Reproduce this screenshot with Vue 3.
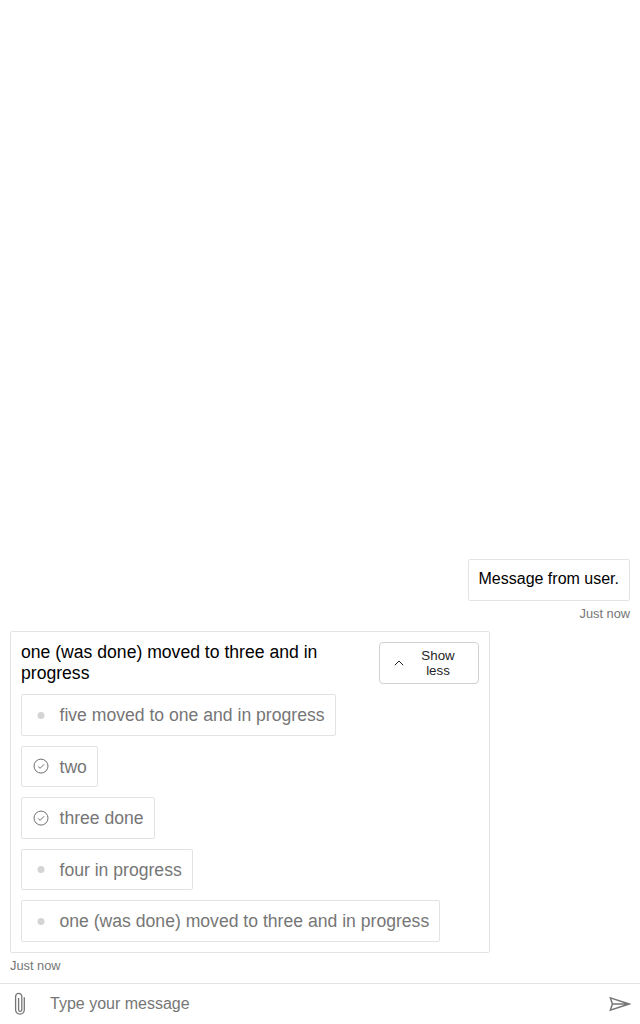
<script setup>
const steps = [
  { text: 'five moved to one and in progress', done: false },
  { text: 'two', done: true },
  { text: 'three done', done: true },
  { text: 'four in progress', done: false },
  { text: 'one (was done) moved to three and in progress', done: false },
]
</script>

<template>
  <main class="chat">
    <section class="transcript">
      <article class="from-user">
        <div class="bubble">Message from user.</div>
        <div class="time">Just now</div>
      </article>
      <article class="from-bot">
        <div class="activity">
          <header class="heading">
            <div class="title">one (was done) moved to three and in progress</div>
            <button class="toggle" type="button">
              <svg class="chevron" width="10" height="6" viewBox="0 0 10 6"><path d="M.8 5.2 5 1l4.2 4.2" /></svg>
              <span>Show less</span>
            </button>
          </header>
          <ul class="steps">
            <li v-for="step in steps" :key="step.text" class="step">
              <svg class="status" width="16" height="16" viewBox="0 0 16 16">
                <g v-if="step.done" class="check">
                  <circle cx="8" cy="8.1" r="7" />
                  <path d="m5.2 8.4 1.9 1.9 4-4" />
                </g>
                <circle v-else class="dot" cx="8" cy="8.4" r="3.5" />
              </svg>
              <span>{{ step.text }}</span>
            </li>
          </ul>
        </div>
        <div class="time">Just now</div>
      </article>
    </section>
    <footer class="send-box">
      <button class="icon-button" type="button" aria-label="Attach">
        <svg class="clip" width="12" height="24" viewBox="0 0 12 24"><path d="M10.3 5.2v12.6a4.35 4.35 0 0 1-8.7 0V4.5a3.1 3.1 0 0 1 6.2 0v13.3a1.6 1.6 0 0 1-3.2 0V6" /></svg>
      </button>
      <input class="field" type="text" placeholder="Type your message" />
      <button class="icon-button" type="button" aria-label="Send">
        <svg width="22" height="16" viewBox="0 0 22 16"><path d="M1.4 1.9 20 8 1.4 14.1 3.4 8zM3.4 8H20" /></svg>
      </button>
    </footer>
  </main>
</template>

<style>
body {
  margin: 0;
  background: #fff;
}
</style>

<style scoped>
.chat {
  display: flex;
  flex-direction: column;
  height: 1024px;
  font-family: "Liberation Sans", Arial, sans-serif;
  font-size: 16px;
  color: #000;
}
.transcript {
  flex: 1;
  display: flex;
  flex-direction: column;
  justify-content: flex-end;
  gap: 10px;
  padding: 0 10px 10px;
}
.from-user {
  display: flex;
  flex-direction: column;
  align-items: flex-end;
}
.bubble {
  box-sizing: border-box;
  height: 42px;
  padding: 10px;
  border: 1px solid #e3e3e3;
  border-radius: 2px;
  line-height: 18px;
}
.time {
  height: 15px;
  padding-top: 5px;
  font-size: 12.8px;
  line-height: 15px;
  color: #767676;
}
.activity {
  box-sizing: border-box;
  width: 480px;
  height: 322px;
  padding: 10px;
  border: 1px solid #e3e3e3;
  border-radius: 2px;
  font-size: 17.6px;
}
.heading {
  display: flex;
  gap: 10px;
  height: 42px;
}
.title {
  flex: 1;
  line-height: 21px;
}
.toggle {
  display: flex;
  align-items: center;
  box-sizing: border-box;
  width: 100px;
  padding: 0 14px;
  border: 1px solid #d1d1d1;
  border-radius: 4px;
  background: #fff;
  font: 13.33px/15px "Liberation Sans", Arial, sans-serif;
  color: #242424;
}
.toggle span {
  flex: 1;
  padding-left: 8px;
  text-align: center;
}
.chevron {
  flex: none;
  fill: none;
  stroke: #242424;
  stroke-width: 1;
}
.steps {
  display: flex;
  flex-direction: column;
  align-items: flex-start;
  gap: 10px;
  margin: 10px 0 0;
  padding: 0;
  list-style: none;
}
.step {
  display: flex;
  align-items: center;
  box-sizing: border-box;
  height: 41.5px;
  padding: 0 10px 0 11px;
  border: 1px solid #e3e3e3;
  border-radius: 2px;
  line-height: 21px;
  color: #767676;
}
.step span {
  padding-top: 1.5px;
}
.status {
  margin-right: 10.5px;
}
.check {
  fill: none;
  stroke: #707070;
}
.dot {
  fill: #d4d4d4;
}
.send-box {
  display: flex;
  box-sizing: border-box;
  height: 41px;
  border-top: 1px solid #e3e3e3;
}
.icon-button {
  display: flex;
  align-items: center;
  justify-content: center;
  width: 40px;
  padding: 0;
  border: 0;
  background: none;
}
.icon-button svg {
  fill: none;
  stroke: #767676;
  stroke-width: 1.5;
}
.icon-button .clip {
  stroke-width: 1.3;
}
.field {
  flex: 1;
  min-width: 0;
  padding: 0 10px;
  border: 0;
  background: none;
  font: 16px "Liberation Sans", Arial, sans-serif;
}
.field::placeholder {
  color: #767676;
}
</style>
